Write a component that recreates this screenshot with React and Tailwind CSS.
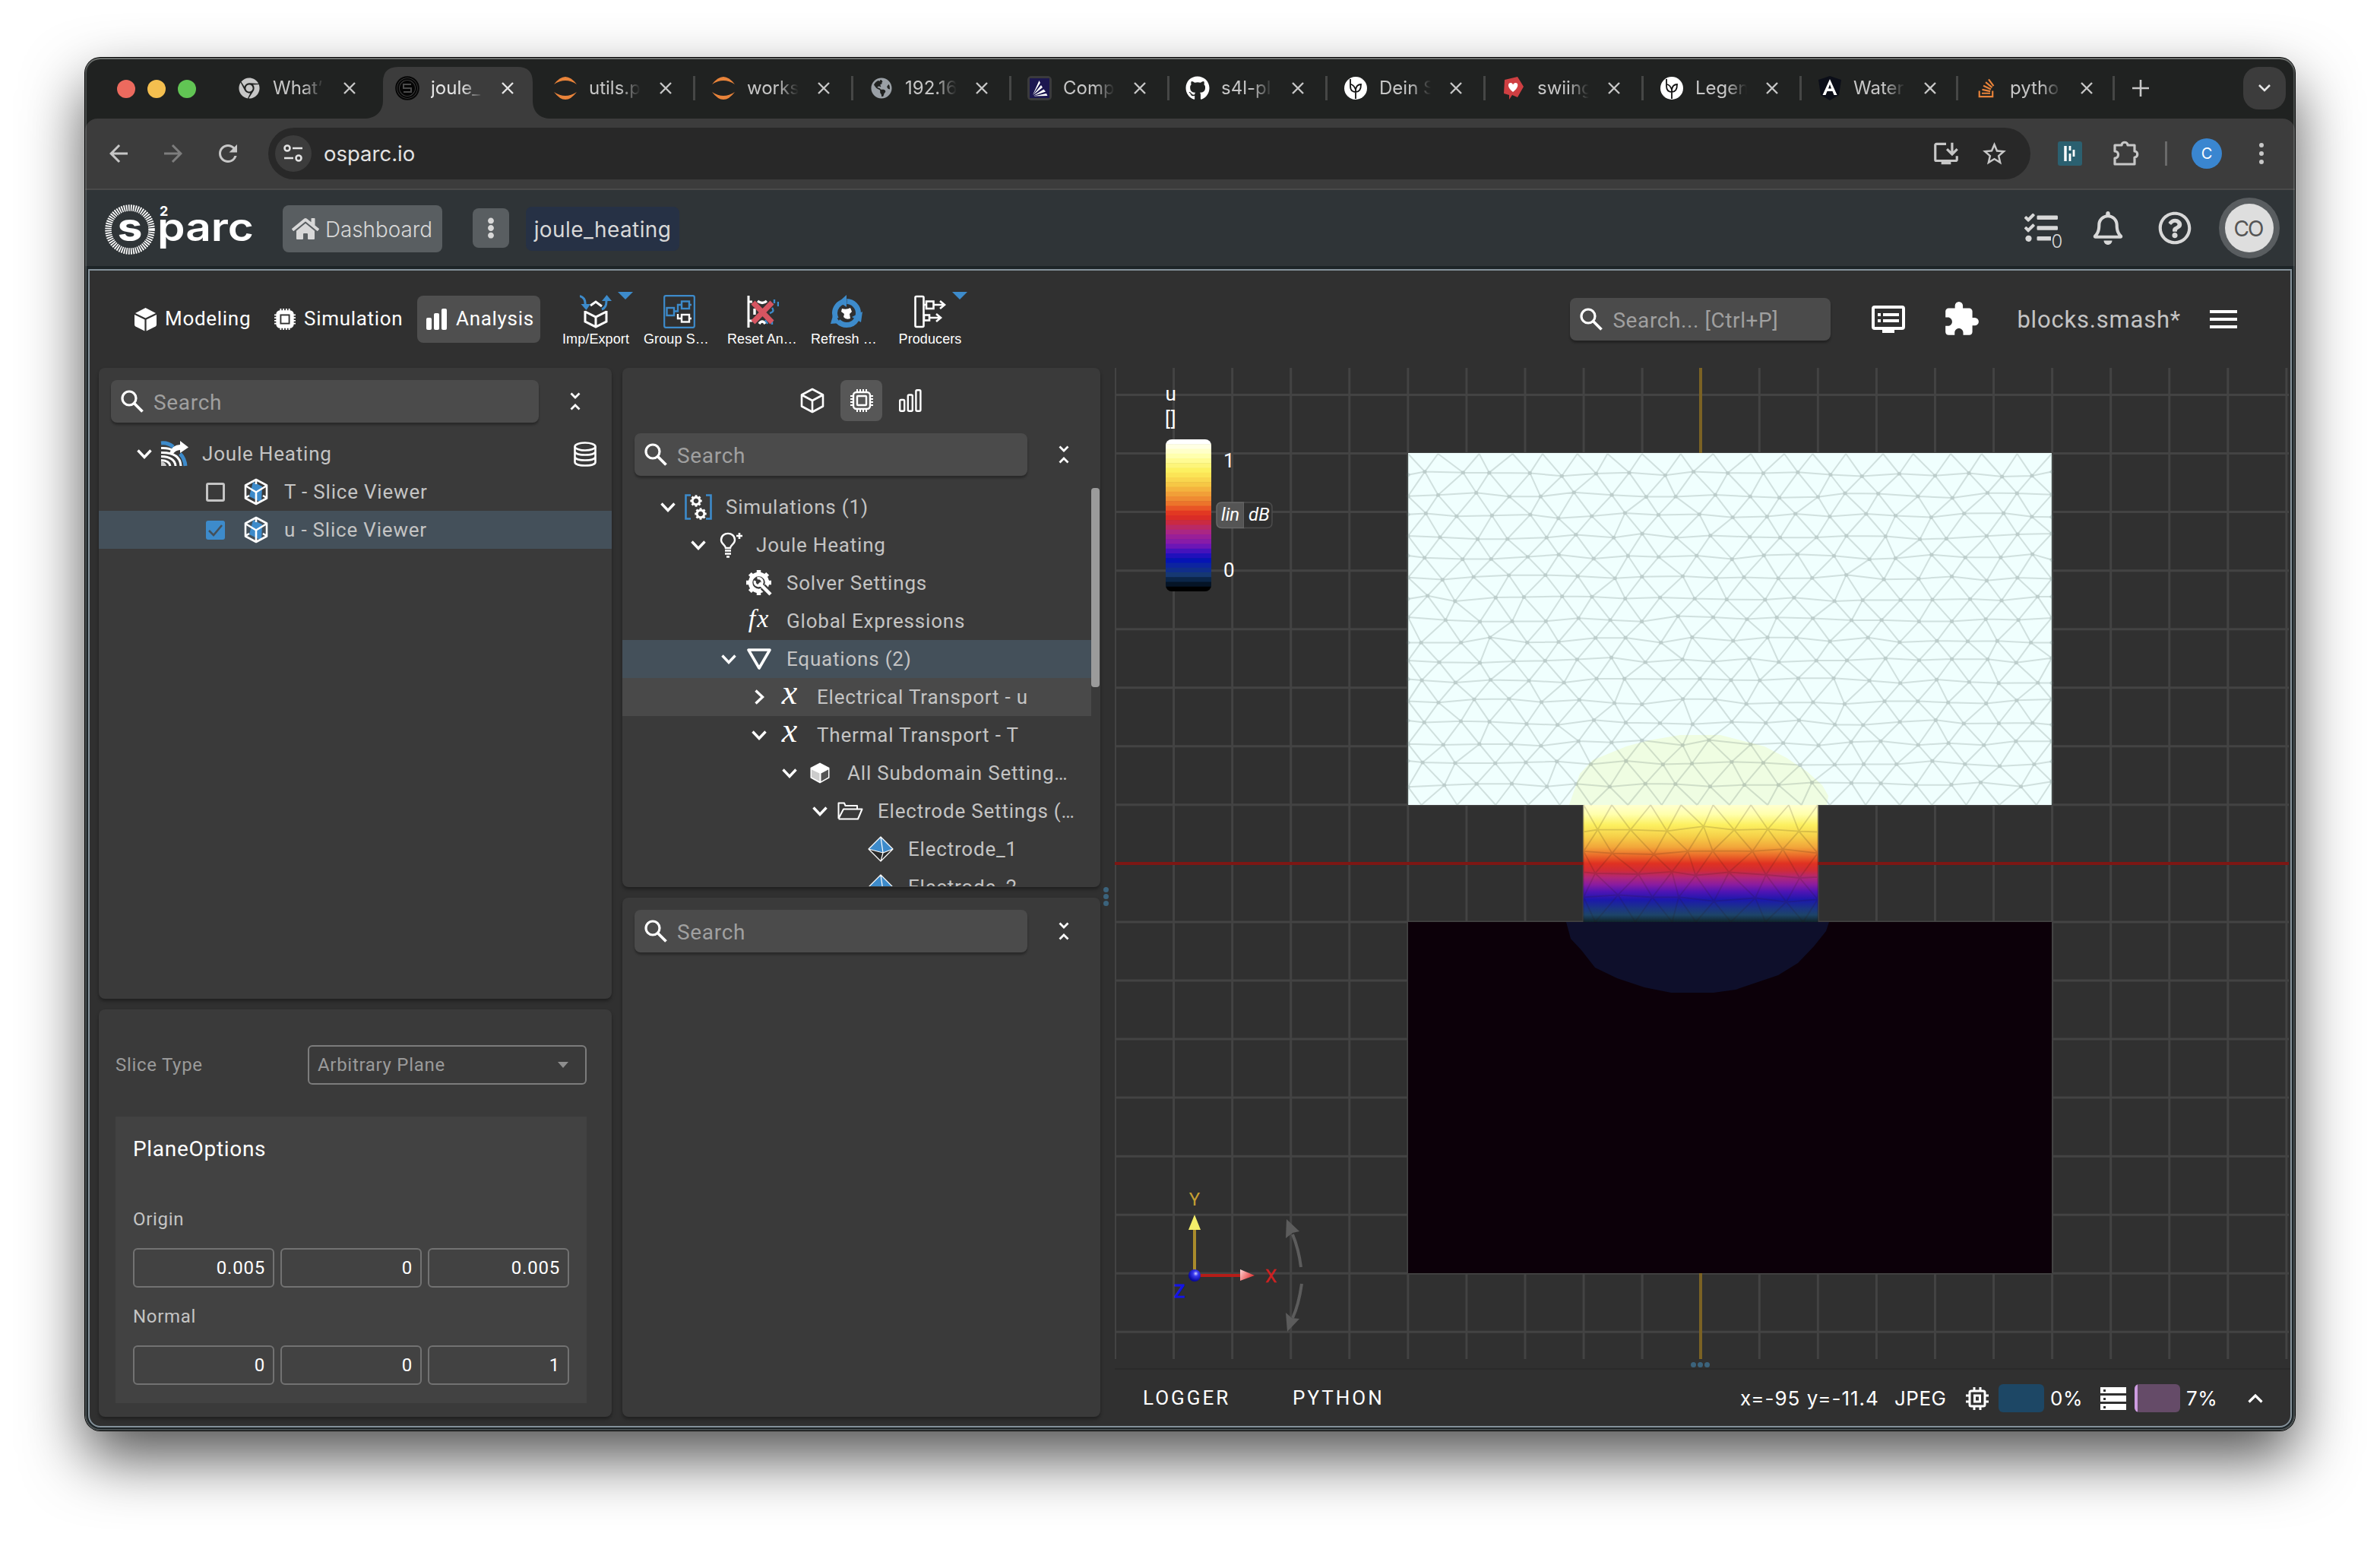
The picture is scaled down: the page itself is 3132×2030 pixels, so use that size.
import React from "react";
import { FaChrome, FaGithub, FaStackOverflow, FaHome, FaEllipsisV, FaRegBell, FaTasks, FaRegQuestionCircle, FaGlobeAmericas } from "react-icons/fa";
import { MdStarBorder, MdExtension, MdArrowBack, MdArrowForward, MdInstallDesktop, MdRefresh } from "react-icons/md";

/* ---------- small icons ---------- */

const Cross = ({ className }) => (
  <svg viewBox="0 0 16 16" className={`h-4 w-4 ${className}`} fill="none" stroke="currentColor" strokeWidth="2.4">
    <path d="M1 1L15 15M15 1L1 15" />
  </svg>
);

const Magnifier = () => (
  <svg viewBox="0 0 30 30" className="h-[30px] w-[30px] shrink-0" fill="none" stroke="#fff" strokeWidth="3.2">
    <circle cx="11" cy="11" r="9" />
    <path d="M17.5 17.5L28.5 28.5" strokeWidth="3.8" />
  </svg>
);

const CollapseAll = () => (
  <svg viewBox="0 0 14 24" className="h-6 w-3.5" fill="none" stroke="#fff" strokeWidth="2.8">
    <path d="M1.5 1.5L7 7L12.5 1.5M1.5 22.5L7 17L12.5 22.5" />
  </svg>
);

const ChevronDown = () => (
  <svg viewBox="0 0 20 13" className="h-[13px] w-5" fill="none" stroke="#fff" strokeWidth="3.4">
    <path d="M1.5 1.5L10 10.5L18.5 1.5" />
  </svg>
);

const ChevronRight = () => (
  <svg viewBox="0 0 13 20" className="h-5 w-[13px]" fill="none" stroke="#fff" strokeWidth="3.4">
    <path d="M1.5 1.5L10.5 10L1.5 18.5" />
  </svg>
);

const SolidCube = () => (
  <svg viewBox="0 0 29 31" className="h-[31px] w-[29px]" fill="#fff">
    <path d="M14.5 0L28 7L14.5 13.5L1 7Z" />
    <path d="M0 9L13.4 15.6V30.5L1.4 24.5Q0 23.6 0 22Z" />
    <path d="M29 9L15.6 15.6V30.5L27.6 24.5Q29 23.6 29 22Z" />
  </svg>
);

const OutlineCube = () => (
  <svg viewBox="0 0 32 34" className="h-[34px] w-8" fill="none" stroke="#fff" strokeWidth="2.6" strokeLinejoin="round">
    <path d="M16 2L30 9.5V24.5L16 32L2 24.5V9.5ZM2 9.5L16 17L30 9.5M16 17V32" />
  </svg>
);

const Chip = ({ solid, className }) => (
  <svg viewBox="0 0 30 30" className={className} fill="none" stroke="#fff">
    <path d="M9 0V5M13 0V5M17 0V5M21 0V5M9 25V30M13 25V30M17 25V30M21 25V30M0 9H5M0 13H5M0 17H5M0 21H5M25 9H30M25 13H30M25 17H30M25 21H30" strokeWidth="2" />
    <rect x="4" y="4" width="22" height="22" rx="4" strokeWidth={solid ? 3 : 2.4} />
    {solid ? <rect x="4" y="4" width="22" height="22" rx="4" fill="#fff" stroke="none" /> : null}
    {solid ? <rect x="9" y="9" width="12" height="12" stroke="#2f2f2f" strokeWidth="2" /> : <rect x="9" y="9" width="12" height="12" rx="1" strokeWidth="2.4" />}
  </svg>
);

const Bars = ({ solid }) =>
  solid ? (
    <svg viewBox="0 0 28 28" className="h-7 w-7" fill="#fff">
      <rect x="0" y="12" width="7" height="16" rx="2" />
      <rect x="10" y="6" width="7" height="22" rx="2" />
      <rect x="20" y="0" width="7" height="28" rx="2" />
    </svg>
  ) : (
    <svg viewBox="0 0 30 30" className="h-[30px] w-[30px]" fill="none" stroke="#fff" strokeWidth="2.4">
      <rect x="1.2" y="14" width="6" height="14.8" rx="1.5" />
      <rect x="11.8" y="7.5" width="6" height="21.3" rx="1.5" />
      <rect x="22.4" y="1.2" width="6" height="27.6" rx="1.5" />
    </svg>
  );

/* ---------- browser favicons ---------- */

const Jupyter = () => (
  <svg viewBox="0 0 30 30" className="h-[30px] w-[30px]" fill="#e8833a">
    <path d="M0 10Q15 -10 30 10Q15 0 0 10Z" />
    <path d="M0 20Q15 40 30 20Q15 30 0 20Z" />
  </svg>
);

const OsparcFav = () => (
  <svg viewBox="0 0 32 32" className="h-8 w-8" fill="none" stroke="#050505">
    <circle cx="16" cy="16" r="14.8" strokeWidth="2" />
    <circle cx="16" cy="16" r="12" strokeWidth="2" />
    <circle cx="16" cy="16" r="9.600" fill="#050505" />
    <path d="M21 11H11V16H21V21H11" stroke="#4a4a4a" strokeWidth="2" />
  </svg>
);

const CompFav = () => (
  <svg viewBox="0 0 32 32" className="h-8 w-8">
    <rect width="32" height="32" rx="5" fill="#3a3a3c" />
    <rect x="3" y="3" width="26" height="26" fill="#1c1750" />
    <path d="M15.5 6L17 9L7 25ZM18 12L20 15L7.500 25ZM21.500 17.500L24 20.500L8 26ZM25 23L26.500 26L8 26.500Z" fill="#fff" />
  </svg>
);

const PlantFav = () => (
  <svg viewBox="0 0 30 30" className="h-[30px] w-[30px]">
    <circle cx="15" cy="15" r="15" fill="#fff" />
    <path d="M8 3V12Q8 20 15 20M15 16V29M15 20Q22 20 22 10Q16 10 15 17Q13 11 9 10" fill="none" stroke="#111" strokeWidth="1.8" />
  </svg>
);

const HeartFav = () => (
  <svg viewBox="0 0 28 30" className="h-[30px] w-7">
    <path d="M2 4L19 0L27 13L19 27L12 24L8 30L8 24L1 22Z" fill="#cf3f42" />
    <path d="M13 20C5 14 6 8 10 8C12 8 13 10 13 10.500C13 10 15 7.500 17 8C21 9 20 15 13 20Z" fill="#fff" />
  </svg>
);

const WaterFav = () => (
  <svg viewBox="0 0 32 32" className="h-8 w-8">
    <path d="M16 0L31 5L28 25L16 32L4 25L1 5Z" fill="#0b0e18" />
    <path d="M6.500 25L16 4L25.500 25H21.500L19.500 20H12.500L10.500 25ZM14 16.500H18L16 11Z" fill="#fff" />
  </svg>
);

const TABS = [
  { icon: <FaChrome className="h-[28px] w-[28px] text-[#c7c7c7]" />, label: "What’", sep: false, w: "w-[208px]" },
  { icon: <OsparcFav />, label: "joule_", active: true, w: "w-[208px]" },
  { icon: <Jupyter />, label: "utils.p", sep: true, w: "w-[208px]" },
  { icon: <Jupyter />, label: "works", sep: true, w: "w-[208px]" },
  { icon: <FaGlobeAmericas className="h-[28px] w-[28px] text-[#9aa0a6]" />, label: "192.16", sep: true, w: "w-[208px]" },
  { icon: <CompFav />, label: "Comp", sep: true, w: "w-[208px]" },
  { icon: <FaGithub className="h-8 w-8 text-white" />, label: "s4l-pl", sep: true, w: "w-[208px]" },
  { icon: <PlantFav />, label: "Dein S", sep: true, w: "w-[208px]" },
  { icon: <HeartFav />, label: "swiing", sep: true, w: "w-[208px]" },
  { icon: <PlantFav />, label: "Legen", sep: true, w: "w-[208px]" },
  { icon: <WaterFav />, label: "Water", sep: true, w: "w-[206px]" },
  { icon: <FaStackOverflow className="h-7 w-7 text-[#e8833a]" />, label: "pytho", sep: true, w: "w-[206px]" },
];

function Tab({ tab }) {
  return (
    <div className={`relative flex h-14 items-center ${tab.w}`}>
      {tab.active ? (
        <svg viewBox="0 0 246 68" className="absolute -left-[20px] top-0 h-[68px] w-[246px]" fill="#3c3c3c">
          <path d="M0 68C14 68 25 60 25 44V20Q25 0 45 0H202Q222 0 222 20V44C222 60 232 68 246 68Z" />
        </svg>
      ) : null}
      <div className="relative ml-[21px] flex w-8 items-center justify-center">{tab.icon}</div>
      <div
        className={`relative ml-[15px] w-[68px] overflow-hidden whitespace-nowrap font-[Inter] text-[24px] [mask-image:linear-gradient(to_right,black_60%,transparent)] ${
          tab.active ? "text-[#e6e6e6]" : "text-[#c7c7c7]"
        }`}
      >
        {tab.label}
      </div>
      <Cross className={`relative ml-[25px] ${tab.active ? "text-[#e6e6e6]" : "text-[#c7c7c7]"}`} />
      {tab.sep ? <div className="ml-auto h-8 w-[3px] bg-[#464746]" /> : null}
    </div>
  );
}

function TabStrip() {
  return (
    <div className="flex h-20 items-start bg-[#202221] pt-3">
      <div className="ml-[42px] flex h-[58px] w-[104px] items-center justify-between">
        <div className="h-6 w-6 rounded-full bg-[#ec6a5e]" />
        <div className="h-6 w-6 rounded-full bg-[#f4bf4f]" />
        <div className="h-6 w-6 rounded-full bg-[#61c554]" />
      </div>
      <div className="ml-[33px] flex">
        {TABS.map((t) => (
          <Tab key={t.label} tab={t} />
        ))}
      </div>
      <svg viewBox="0 0 22 22" className="ml-[23px] mt-[17px] h-[22px] w-[22px]" fill="none" stroke="#c7c7c7" strokeWidth="2.6">
        <path d="M11 0V22M0 11H22" />
      </svg>
      <div className="ml-auto mr-3 flex h-14 w-14 items-center justify-center rounded-[20px] bg-[#3c3c3c]">
        <svg viewBox="0 0 16 10" className="h-[10px] w-4" fill="none" stroke="#e6e6e6" strokeWidth="2.6">
          <path d="M1 1L8 8L15 1" />
        </svg>
      </div>
    </div>
  );
}

function AddressBar() {
  return (
    <div className="flex h-[94px] items-center rounded-t-2xl border-b-2 border-[#4a4a4a] bg-[#3c3c3c]">
      <MdArrowBack className="ml-[26px] h-9 w-9 text-[#c7c7c7]" />
      <MdArrowForward className="ml-[36px] h-9 w-9 text-[#7d7d7d]" />
      <MdRefresh className="ml-[36px] h-9 w-9 text-[#c7c7c7]" />
      <div className="ml-[35px] flex h-[68px] w-[2319px] items-center rounded-full bg-[#282828] pl-[9px]">
        <div className="flex h-12 w-12 items-center justify-center rounded-full bg-[#3c3c3c]">
          <svg viewBox="0 0 26 24" className="h-6 w-[26px]" fill="none" stroke="#e3e3e3" strokeWidth="2.6">
            <circle cx="5" cy="5" r="3.500" />
            <path d="M12 5H25M1 18H13" />
            <circle cx="20" cy="18" r="3.500" />
          </svg>
        </div>
        <div className="ml-4 pt-0.5 font-[Inter] text-[27.500px] text-[#e3e3e3]">osparc.io</div>
        <MdInstallDesktop className="ml-auto h-[38px] w-[38px] text-[#c7c7c7]" />
        <MdStarBorder className="ml-[26px] mr-[29px] h-[37px] w-[37px] text-[#c7c7c7]" />
      </div>
      <svg viewBox="0 0 32 32" className="ml-9 h-8 w-8">
        <rect width="32" height="32" rx="3" fill="#2b6070" />
        <path d="M10 6V26" stroke="#fff" strokeWidth="3.400" />
        <path d="M16 6V12M16 16V26M21 11V20" stroke="#fff" strokeWidth="2.800" />
      </svg>
      <svg viewBox="0 0 34 34" className="ml-[41px] h-[34px] w-[34px]" fill="none" stroke="#c7c7c7" strokeWidth="3.200" strokeLinejoin="round">
        <path d="M2 6H11C11 1 19 1 19 6H28V14C33 14 33 22 28 22V31H2V23C8 23 8 14 2 14Z" />
      </svg>
      <div className="ml-[34px] h-8 w-[3px] bg-[#6a6a6a]" />
      <div className="ml-[32px] flex h-10 w-10 items-center justify-center rounded-full bg-[#3a86d0] font-[Inter] text-[20px] text-white">C</div>
      <div className="ml-[49px] flex h-7 flex-col justify-between">
        <div className="h-1.5 w-1.5 rounded-full bg-[#c7c7c7]" />
        <div className="h-1.5 w-1.5 rounded-full bg-[#c7c7c7]" />
        <div className="h-1.5 w-1.5 rounded-full bg-[#c7c7c7]" />
      </div>
    </div>
  );
}

/* ---------- platform header ---------- */

function Logo() {
  return (
    <svg viewBox="0 0 196 72" className="ml-[26px] h-[72px] w-[196px]">
      <circle cx="33" cy="38" r="28.500" fill="none" stroke="#fff" strokeWidth="8.500" strokeDasharray="1.7 1.3" />
      <circle cx="33" cy="38" r="24" fill="#2f3437" />
      <text x="33" y="53" textAnchor="middle" fontFamily="Inter" fontWeight="700" fontSize="52" fill="#fff" textLength="33" lengthAdjust="spacingAndGlyphs">s</text>
      <text x="69" y="53" fontFamily="Inter" fontWeight="600" fontSize="51" fill="#fff" textLength="127" lengthAdjust="spacingAndGlyphs">parc</text>
      <text x="72" y="20" fontFamily="Inter" fontWeight="700" fontSize="18" fill="#fff">2</text>
    </svg>
  );
}

function PlatformHeader() {
  return (
    <div className="flex h-[100px] items-center bg-[#2f3437] font-[Inter] text-[#d8d8d8]">
      <Logo />
      <div className="ml-[38px] mt-0.5 flex h-[62px] w-[210px] items-center rounded-lg bg-[#595e61] pl-3">
        <FaHome className="h-[36px] w-[36px]" />
        <div className="ml-2 pt-[3px] text-[27.800px] font-light">Dashboard</div>
      </div>
      <div className="ml-10 flex h-[52px] w-12 items-center justify-center rounded-lg bg-[#595e61]">
        <FaEllipsisV className="h-[28px] w-[28px]" />
      </div>
      <div className="ml-[22px] mt-0.5 flex h-[58px] w-[202px] items-center justify-center rounded-lg bg-[#263145]">
        <div className="pt-0.5 text-[28px] tracking-[0.400px]">joule_heating</div>
      </div>
      <div className="relative ml-auto h-[44px] w-[44px]">
        <FaTasks className="h-[44px] w-[44px]" />
        <div className="absolute left-[35px] top-[28px] flex h-6 w-4 items-center justify-center bg-[#2f3437] text-[24px] font-light">0</div>
      </div>
      <FaRegBell className="ml-[44px] h-[44px] w-[44px]" />
      <FaRegQuestionCircle className="ml-[44px] h-[44px] w-[44px]" />
      <div className="ml-[36px] mr-5 flex h-20 w-20 items-center justify-center rounded-full bg-[#595d60]">
        <div className="flex h-16 w-16 items-center justify-center rounded-full bg-[#dedede] pr-[3px] pt-0.5 text-[28px] tracking-[-2px] text-[#555]">CO</div>
      </div>
    </div>
  );
}

/* ---------- ribbon ---------- */

const ImpExport = () => (
  <svg viewBox="0 0 42 44" className="h-[44px] w-[42px]" fill="none">
    <path d="M7 21V35L21 42L35 35V21M7 22L21 29L35 22M21 29V42" stroke="#fff" strokeWidth="3" />
    <path d="M14 14L21 9L29 15" stroke="#fff" strokeWidth="3" />
    <path d="M0 1.500Q8 4 7 13" stroke="#3d8bcb" strokeWidth="3" />
    <path d="M1.500 12H14L8.500 20Z" fill="#3d8bcb" />
    <path d="M29 19Q35 17 35 8" stroke="#3d8bcb" strokeWidth="3" />
    <path d="M29 8H42L35.500 0Z" fill="#3d8bcb" />
  </svg>
);

const GroupStream = () => (
  <svg viewBox="0 0 42 44" className="h-[44px] w-[42px]" fill="none">
    <rect x="1.200" y="1.200" width="39.600" height="41.600" rx="2" stroke="#3d8bcb" strokeWidth="2.200" />
    <rect x="4.500" y="17" width="9.500" height="10" stroke="#3d8bcb" strokeWidth="2.400" />
    <path d="M14 21.500H19V13H24M33 13H37" stroke="#3d8bcb" strokeWidth="2.400" />
    <rect x="24" y="8.500" width="10" height="9.500" stroke="#3d8bcb" strokeWidth="2.400" />
    <path d="M19 25V31H24M33 31H37" stroke="#fff" strokeWidth="2.400" />
    <rect x="24" y="26" width="10" height="9.500" stroke="#fff" strokeWidth="2.400" />
  </svg>
);

const ResetAnalysis = () => (
  <svg viewBox="0 0 42 44" className="h-[44px] w-[42px]" fill="none">
    <path d="M2 1V43M2 9H7M2 34H7" stroke="#fff" strokeWidth="3" />
    <path d="M14 8Q20 13 26 8M10 18V26M16 38Q20 32 24 38" stroke="#fff" strokeWidth="3.400" />
    <path d="M36 6V11M41 9V15M30 24Q37 22 33 17M24 33L27 38M33 32V39" stroke="#3d8bcb" strokeWidth="2.400" />
    <path d="M8 10L33 36M33 10L8 36" stroke="#d65561" strokeWidth="7" />
  </svg>
);

const RefreshStream = () => (
  <svg viewBox="0 0 42 44" className="h-[44px] w-[42px]" fill="none">
    <circle cx="21" cy="24" r="15.500" stroke="#3d8bcb" strokeWidth="7" strokeDasharray="28.500 4" strokeDashoffset="-8" />
    <path d="M21 0V16L11 9ZM42 22L28 29L40 36ZM0 38L4 24L13 37Z" fill="#3d8bcb" />
    <path d="M15 18Q21 20 26 17L28 22L25 25L26 31Q20 33 17 29L18 25L14 22Z" fill="#fff" />
  </svg>
);

const Producers = () => (
  <svg viewBox="0 0 42 44" className="h-[44px] w-[42px]" fill="none" stroke="#fff" strokeWidth="2.600">
    <rect x="1.500" y="2" width="11" height="40" rx="1.500" />
    <path d="M12 13H16M26 13H40M34 8L40 13L34 18M12 30H14M21 30H34M29 25L35 30L29 35" />
    <rect x="16" y="8.500" width="9.500" height="9.500" />
    <rect x="13" y="26.500" width="7" height="7" />
  </svg>
);

const RIBBON = [
  { label: "Imp/Export", icon: <ImpExport />, menu: true, align: "text-center" },
  { label: "Group S…", icon: <GroupStream />, align: "text-left" },
  { label: "Reset An…", icon: <ResetAnalysis />, align: "text-left" },
  { label: "Refresh …", icon: <RefreshStream />, align: "text-left" },
  { label: "Producers", icon: <Producers />, menu: true, align: "text-center" },
];

function Ribbon() {
  return (
    <div className="flex h-[128px] shrink-0 items-center text-[26px] tracking-[0.7px] text-white">
      <div className="ml-[59px] flex w-[184px] items-center gap-[11px]">
        <SolidCube />
        <span className="-mt-0.5">Modeling</span>
      </div>
      <div className="flex w-[188px] items-center gap-[11px]">
        <Chip solid className="h-7 w-7" />
        <span className="-mt-0.5">Simulation</span>
      </div>
      <div className="flex h-[62px] w-[162px] items-center gap-[11px] rounded-lg bg-[#4f4f4f] pl-3">
        <Bars solid />
        <span className="-mt-0.5">Analysis</span>
      </div>
      <div className="ml-[26px] mt-0.5 flex gap-4">
        {RIBBON.map((r) => (
          <div key={r.label} className="relative w-[94px]">
            <div className="flex justify-center">{r.icon}</div>
            <div className={`mt-[5px] whitespace-nowrap font-['Liberation_Sans'] text-[18px] leading-[18px] tracking-[0.100px] ${r.align}`}>{r.label}</div>
            {r.menu ? (
              <svg viewBox="0 0 20 10" className="absolute -top-[4px] left-[76px] h-[10px] w-5" fill="#3d8bcb">
                <path d="M0 0H20L10 10Z" />
              </svg>
            ) : null}
          </div>
        ))}
      </div>
      <div className="ml-auto flex h-14 w-[343px] items-center rounded-lg bg-[#4b4b4b] pl-[13px] shadow-[0_3px_3px_rgba(0,0,0,0.3)]">
        <Magnifier />
        <span className="ml-[13px] pt-[3px] text-[28px] tracking-[0.600px] text-[#a0a0a0]">Search... [Ctrl+P]</span>
      </div>
      <svg viewBox="0 0 44 36" className="ml-[54px] h-9 w-11" fill="none" stroke="#fff" strokeWidth="4">
        <rect x="2" y="2" width="40" height="28" rx="2" />
        <path d="M8 12H12M15 12H36M8 20H12M15 20H36M14 34H30" />
      </svg>
      <MdExtension className="ml-[49px] h-[50px] w-[50px]" />
      <span className="ml-[48px] pt-0.5 text-[31px] tracking-[0.800px] text-[#c4c4c4]">blocks.smash*</span>
      <div className="ml-[38px] mr-[70px] flex h-6 w-9 flex-col justify-between">
        <div className="h-1 bg-white" />
        <div className="h-1 bg-white" />
        <div className="h-1 bg-white" />
      </div>
    </div>
  );
}

/* ---------- panels ---------- */

const PANEL = "shrink-0 overflow-hidden rounded-lg bg-[#3a3a3a] shadow-[0_3px_4px_rgba(0,0,0,0.35)]";

function SearchRow({ w, right }) {
  return (
    <div className="flex items-center">
      <div className={`flex h-14 items-center rounded-lg bg-[#4b4b4b] pl-[13px] shadow-[0_3px_3px_rgba(0,0,0,0.3)] ${w}`}>
        <Magnifier />
        <span className="ml-[13px] pt-[3px] text-[28px] tracking-[0.700px] text-[#a0a0a0]">Search</span>
      </div>
      <div className={right}>
        <CollapseAll />
      </div>
    </div>
  );
}

const FieldIcon = () => (
  <svg viewBox="0 0 38 34" className="h-[34px] w-[38px]" fill="none">
    <path d="M1 3Q10 2 17 8M26 17Q32 23 33 33" stroke="#3d8bcb" strokeWidth="5" />
    <path d="M1 9.500Q12 9 17 13M1 15.500Q26 15 27 33M1 20.500Q19 21 20 33M1 25.500Q12 26 13 33" stroke="#fff" strokeWidth="3" />
    <path d="M1 27V33H8Q7 28 1 27Z" fill="#ccc" />
    <path d="M12 16Q16 5 26 5V0L37 8.500L26 16V12Q20 12 16 18Z" fill="#fff" />
  </svg>
);

const SliceIcon = () => (
  <svg viewBox="0 0 32 36" className="h-[36px] w-8" fill="none">
    <path d="M12 5L24 11L23 32L7 24Z" fill="#3d8bcb" />
    <path d="M16 2L30 9.500V26.500L16 34L2 26.500V9.500ZM2 10L16 18.500L30 10M16 18.500V34M16 2V8M2 26L7 23M30 26L25 23" stroke="#fff" strokeWidth="2.600" strokeLinejoin="round" />
  </svg>
);

const Database = () => (
  <svg viewBox="0 0 30 33" className="h-[33px] w-[30px]" fill="none" stroke="#fff" strokeWidth="2.600">
    <ellipse cx="15" cy="6.500" rx="13.500" ry="5" />
    <path d="M1.500 6.500V27C1.500 33 28.500 33 28.500 27V6.500M1.500 13C1.500 19 28.500 19 28.500 13M1.500 20C1.500 26 28.500 26 28.500 20" />
  </svg>
);

function SliceRow({ label, checked }) {
  return (
    <div className={`flex h-[50px] items-center pl-[141px] ${checked ? "bg-[#44505a]" : ""}`}>
      {checked ? (
        <svg viewBox="0 0 25 25" className="h-[25px] w-[25px]">
          <rect width="25" height="25" rx="3" fill="#3d8bcb" />
          <path d="M4 13L10 19L21 6" fill="none" stroke="#44505a" strokeWidth="2.600" />
        </svg>
      ) : (
        <div className="h-[25px] w-[25px] rounded-[3px] border-3 border-[#c4c4c4]" />
      )}
      <div className="ml-[25px]">
        <SliceIcon />
      </div>
      <span className="ml-[21px]">{label}</span>
    </div>
  );
}

function ResultsPanel() {
  return (
    <div className={`h-[830px] pt-4 ${PANEL}`}>
      <div className="pl-4">
        <SearchRow w="w-[563px]" right="ml-[41px]" />
      </div>
      <div className="mt-4">
        <div className="flex h-[50px] items-center pl-[50px]">
          <ChevronDown />
          <div className="ml-[11px]">
            <FieldIcon />
          </div>
          <span className="ml-[17px]">Joule Heating</span>
          <div className="ml-auto mr-5">
            <Database />
          </div>
        </div>
        <SliceRow label="T - Slice Viewer" />
        <SliceRow label="u - Slice Viewer" checked />
      </div>
    </div>
  );
}

function NumberRow({ label, values, labelMargin }) {
  return (
    <div className={labelMargin}>
      <div className="h-7 leading-7">{label}</div>
      <div className="mt-[24px] flex gap-2 text-white">
        {values.map((v, i) => (
          <div key={i} className="flex h-[52px] w-[186px] items-center justify-end rounded-md border-2 border-[#727272] pr-[10px] tracking-[0.800px]">
            {v}
          </div>
        ))}
      </div>
    </div>
  );
}

function SettingsPanel() {
  return (
    <div className={`h-[536px] pl-[22px] text-[24px] tracking-[0.700px] ${PANEL}`}>
      <div className="mt-[47px] flex items-center text-[#9a9a9a]">
        <span className="w-[253px]">Slice Type</span>
        <div className="flex h-[52px] w-[367px] items-center justify-between rounded-md border-2 border-[#7c7c7c] pl-[11px] pr-[22px]">
          <span>Arbitrary Plane</span>
          <svg viewBox="0 0 14 8" className="h-2 w-3.5" fill="#8e8e8e">
            <path d="M0 0H14L7 8Z" />
          </svg>
        </div>
      </div>
      <div className="mt-[42px] h-[377px] w-[620px] bg-[#424242] pl-[23px] pt-[27px]">
        <div className="h-8 text-[28px] leading-8 text-white">PlaneOptions</div>
        <NumberRow label="Origin" values={["0.005", "0", "0.005"]} labelMargin="mt-[62px]" />
        <NumberRow label="Normal" values={["0", "0", "1"]} labelMargin="mt-[24px]" />
      </div>
    </div>
  );
}

/* ---------- model tree ---------- */

const Gear = ({ cx, cy, r, sw }) => (
  <g transform={`translate(${cx} ${cy})`} stroke="#fff" fill="none">
    <circle r={r} strokeWidth={sw} />
    {[0, 45, 90, 135, 180, 225, 270, 315].map((a) => (
      <path key={a} d={`M0 ${-r}V${-r - sw}`} strokeWidth={sw} transform={`rotate(${a})`} />
    ))}
  </g>
);

const SimulationsIcon = () => (
  <svg viewBox="0 0 36 34" className="h-[34px] w-9" fill="none">
    <path d="M8 1.500H1.500V32.500H8M28 1.500H34.500V32.500H28" stroke="#3d8bcb" strokeWidth="2.600" />
    <Gear cx={15} cy={9} r={4.800} sw={2.900} />
    <Gear cx={21} cy={26} r={4.800} sw={2.900} />
  </svg>
);

const Bulb = () => (
  <svg viewBox="-3 0 30 34" className="h-[34px] w-[30px] overflow-visible" fill="none" stroke="#fff" strokeWidth="2.400">
    <path d="M8 21C8 17 2 16 2 10.500C2 -1 20 -1 20 10.500C20 16 14 17 14 21Z" />
    <path d="M7 24.500H15M7 28.500H15M9 32.500H13M26 1V9M22 5H30" strokeWidth="2.600" />
  </svg>
);

const SolverIcon = () => (
  <svg viewBox="0 0 36 36" className="h-9 w-9" fill="none">
    <Gear cx={17.500} cy={17.500} r={11} sw={5.500} />
    <path d="M23 23L34 34" stroke="#3a3a3a" strokeWidth="9" />
    <path d="M18 18L33 33" stroke="#fff" strokeWidth="4.500" />
    <path d="M12.500 15A5 5 0 1 0 15.500 12" stroke="#fff" strokeWidth="3.200" />
  </svg>
);

const Nabla = () => (
  <svg viewBox="0 0 32 28" className="h-7 w-8" fill="none" stroke="#fff" strokeWidth="3.600" strokeLinejoin="round">
    <path d="M2 2H30L16 26Z" />
  </svg>
);

const ShadedCube = () => (
  <svg viewBox="0 0 26 28" className="h-7 w-[26px]">
    <path d="M13 0.500L25.500 7V20.500L13 27.500L0.500 20.500V7Z" fill="#fff" />
    <path d="M2 9.500L12.500 14.500V25L2 19.500Z" fill="#ccc" />
    <path d="M24 9.500L14.500 14.500V25L24 19.500Z" fill="#555" />
  </svg>
);

const FolderOpen = () => (
  <svg viewBox="0 0 34 24" className="h-6 w-[34px]" fill="none" stroke="#fff" strokeWidth="2" strokeLinejoin="round">
    <path d="M1.500 22V1.500H9L10.500 5H26V9.500M1.500 22L8 9.500H32.500L27 22.500H1.500" />
  </svg>
);

const Octahedron = () => (
  <svg viewBox="0 0 34 34" className="h-[34px] w-[34px]">
    <path d="M17 1L33 17L20 22L1 17Z" fill="#3d8bcb" />
    <path d="M1 17L20 22L17 33ZM20 22L33 17L17 33Z" fill="#2a2a2a" />
    <path d="M17 1L33 17L17 33L1 17ZM17 1L20 22L17 33M1 17L20 22L33 17" fill="none" stroke="#fff" strokeWidth="1.200" strokeLinejoin="round" />
  </svg>
);

const Fx = () => <span className="-mt-1.5 font-['Liberation_Serif'] text-[34px] italic leading-none tracking-[2px] text-white">fx</span>;
const Chi = () => <span className="-mt-3 font-['Liberation_Serif'] text-[46px] italic leading-none tracking-normal text-white">x</span>;

const TREE = [
  { indent: "pl-[40px]", open: true, icon: <SimulationsIcon />, label: "Simulations (1)" },
  { indent: "pl-[80px]", open: true, icon: <Bulb />, label: "Joule Heating" },
  { indent: "pl-[120px]", icon: <SolverIcon />, label: "Solver Settings" },
  { indent: "pl-[120px]", icon: <Fx />, label: "Global Expressions" },
  { indent: "pl-[120px]", open: true, icon: <Nabla />, label: "Equations (2)", bg: "bg-[#44505a]" },
  { indent: "pl-[160px]", closed: true, icon: <Chi />, label: "Electrical Transport - u", bg: "bg-[#494949]" },
  { indent: "pl-[160px]", open: true, icon: <Chi />, label: "Thermal Transport - T" },
  { indent: "pl-[200px]", open: true, icon: <ShadedCube />, label: "All Subdomain Setting…" },
  { indent: "pl-[240px]", open: true, icon: <FolderOpen />, label: "Electrode Settings (…" },
  { indent: "pl-[280px]", icon: <Octahedron />, label: "Electrode_1" },
  { indent: "pl-[280px]", icon: <Octahedron />, label: "Electrode_2" },
];

function TreePanel() {
  return (
    <div className={`h-[683px] pt-4 ${PANEL}`}>
      <div className="ml-[231px] flex h-[54px] items-center">
        <div className="flex w-[56px] justify-start pl-[3px]">
          <OutlineCube />
        </div>
        <div className="flex h-[54px] w-[55px] items-center justify-center rounded-lg bg-[#575757]">
          <Chip className="h-[30px] w-[30px]" />
        </div>
        <div className="ml-[22px]">
          <Bars />
        </div>
      </div>
      <div className="mt-4 pl-4">
        <SearchRow w="w-[517px]" right="ml-[41px]" />
      </div>
      <div className="mt-4 flex h-[524px] overflow-hidden">
        <div className="w-[617px]">
          {TREE.map((n) => (
            <div key={n.label} className={`flex h-[50px] items-center ${n.indent} ${n.bg || ""}`}>
              <div className="flex w-10 shrink-0 justify-center">{n.open ? <ChevronDown /> : n.closed ? <ChevronRight /> : null}</div>
              <div className="flex w-10 shrink-0 items-center justify-center">{n.icon}</div>
              <span className="ml-4 whitespace-nowrap">{n.label}</span>
            </div>
          ))}
        </div>
        <div className="h-[262px] w-[11px] rounded-[4px] bg-[#9b9b9b]" />
      </div>
    </div>
  );
}

/* ---------- 3D view ---------- */

function makeMesh(x0, y0, w, h, cols, rows, amp, seed) {
  let s = seed;
  const rnd = () => {
    s = (s * 16807) % 2147483647;
    return s / 2147483647 - 0.5;
  };
  const grid = [];
  for (let r = 0; r <= rows; r++) {
    const us = [];
    if (r % 2 === 0) for (let k = 0; k <= cols; k++) us.push(k);
    else {
      us.push(0);
      for (let k = 0; k < cols; k++) us.push(k + 0.5);
      us.push(cols);
    }
    grid.push(
      us.map((u) => {
        const edgeX = u === 0 || u === cols;
        const edgeY = r === 0 || r === rows;
        return [x0 + (u * w) / cols + (edgeX ? 0 : rnd() * amp), y0 + (r * h) / rows + (edgeY ? 0 : rnd() * amp * 0.7)];
      })
    );
  }
  const seg = (a, b) => `M${a[0].toFixed(1)} ${a[1].toFixed(1)}L${b[0].toFixed(1)} ${b[1].toFixed(1)}`;
  let d = "";
  grid.forEach((row, r) => {
    if (r > 0 && r < rows) for (let k = 1; k < row.length; k++) d += seg(row[k - 1], row[k]);
    if (r % 2 === 0) {
      [grid[r - 1], grid[r + 1]].forEach((o) => {
        if (!o) return;
        row.forEach((p, k) => {
          d += seg(p, o[k]) + (o[k + 1] ? seg(p, o[k + 1]) : "");
        });
      });
    }
  });
  return { d, nodes: grid.slice(1, -1).flat() };
}

const MESH_TOP = makeMesh(1853, 597, 847, 462, 19, 17, 11, 4211);
const MESH_MID = makeMesh(2084, 1059, 308, 154, 7, 5, 14, 977);

const BANDS = [
  "#ffffff", "#ffffe4", "#ffffc9", "#ffffae", "#fffb93", "#fdf57a", "#fcf060", "#fbe456",
  "#f9d64e", "#f6c745", "#f4b33e", "#f19f38", "#ef8b32", "#ec742b", "#e85526", "#e23822",
  "#da2c27", "#ca2a42", "#ba2964", "#aa2684", "#991f98", "#881ba8", "#6c16b6", "#4412bc",
  "#2010bc", "#0514b4", "#0c24a0", "#102e8a", "#163872", "#0b2548", "#051426", "#000000",
];

const V_LINES = Array.from({ length: 21 }, (_, i) => 1467.500 + i * 77.070);
const H_LINES = Array.from({ length: 17 }, (_, i) => 519.500 + i * 77.050);

function View3D() {
  return (
    <svg viewBox="1467 484 1545 1304" className="h-[1304px] w-[1545px] shrink-0">
      <defs>
        <linearGradient id="neck" x1="0" y1="0" x2="0" y2="1">
          <stop offset="0" stopColor="#ffffd0" />
          <stop offset="0.08" stopColor="#ffffac" />
          <stop offset="0.17" stopColor="#fcf060" />
          <stop offset="0.27" stopColor="#f6cf48" />
          <stop offset="0.36" stopColor="#f2a63a" />
          <stop offset="0.44" stopColor="#ea6428" />
          <stop offset="0.5" stopColor="#e03121" />
          <stop offset="0.56" stopColor="#cf2b38" />
          <stop offset="0.62" stopColor="#b02778" />
          <stop offset="0.68" stopColor="#8a1ca0" />
          <stop offset="0.74" stopColor="#5014b4" />
          <stop offset="0.81" stopColor="#1c18ac" />
          <stop offset="0.88" stopColor="#1b3488" />
          <stop offset="0.94" stopColor="#1d4468" />
          <stop offset="1" stopColor="#10242a" />
        </linearGradient>
        <radialGradient id="ball" cx="0.6" cy="0.35" r="0.6">
          <stop offset="0" stopColor="#cfd0ff" />
          <stop offset="0.35" stopColor="#3a3af0" />
          <stop offset="1" stopColor="#0808a0" />
        </radialGradient>
        <linearGradient id="coneX" x1="0" y1="0" x2="1" y2="0.5">
          <stop offset="0" stopColor="#ffd6d6" />
          <stop offset="1" stopColor="#e03030" />
        </linearGradient>
      </defs>

      <g stroke="#434343" strokeWidth="3">
        {V_LINES.map((x) => (
          <path key={x} d={`M${x} 484V1788`} />
        ))}
        {H_LINES.map((y) => (
          <path key={y} d={`M1467 ${y}H3012`} />
        ))}
      </g>
      <path d="M2238 484V1788" stroke="#7b6223" strokeWidth="4" />
      <path d="M1467 1136H3012" stroke="#7d1714" strokeWidth="4" />

      <rect x="1853" y="596" width="847" height="463" fill="#f0fffe" />
      <path d="M2065 1059L2079 1018L2096 1000L2140 982L2170 974L2211 967H2264L2322 982L2351 997L2378 1015L2398 1033L2406 1047L2404 1059Z" fill="#effde2" />
      <rect x="2083.500" y="1059" width="309" height="154" fill="url(#neck)" />
      <rect x="1853" y="1213" width="847" height="462" fill="#0c0009" />
      <path d="M2061 1213L2067 1235L2081 1250L2099 1273L2128 1287L2164 1299L2199 1306H2255L2284 1302L2340 1283L2366 1267L2387 1245L2403 1225L2407 1213Z" fill="#0e0f2b" />
      <path d={MESH_TOP.d} stroke="#5a6c68" strokeOpacity="0.21" strokeWidth="2" />
      <g fill="#5a6c68" fillOpacity="0.16">
        {MESH_TOP.nodes.map(([x, y], i) => (
          <circle key={i} cx={x} cy={y} r="2.600" />
        ))}
      </g>
      <path d={MESH_MID.d} stroke="#2a1a10" strokeOpacity="0.16" strokeWidth="1.800" />

      {/* orientation gizmo */}
      <path d="M1572 1672V1616" stroke="#a98b2c" strokeWidth="4" />
      <path d="M1572 1598L1580 1618H1564Z" fill="#f4ee6a" />
      <path d="M1578 1678H1634" stroke="#b51d18" strokeWidth="4" />
      <path d="M1651 1678L1632 1685V1670Z" fill="url(#coneX)" />
      <circle cx="1572" cy="1678" r="8" fill="url(#ball)" />
      <g fontFamily="Roboto" fontSize="24" textAnchor="middle">
        <text x="1572" y="1586" fill="#c59f33">Y</text>
        <text x="1672.500" y="1686.500" fill="#d02020" stroke="#d02020" strokeWidth="0.400">X</text>
        <text x="1552.500" y="1706.500" fill="#1414e6" stroke="#1414e6" strokeWidth="1">Z</text>
      </g>
      <g fill="none" stroke="#5c5c5c" strokeWidth="4">
        <path d="M1712 1667Q1709 1643 1701 1624M1713 1689Q1709 1717 1701 1734" />
      </g>
      <path d="M1693 1604L1710 1620L1701 1622L1692 1629ZM1694 1752L1710 1735L1700 1734L1692 1727Z" fill="#5c5c5c" />

      {/* colour legend */}
      <clipPath id="legend">
        <rect x="1534" y="578" width="60" height="200" rx="8" />
      </clipPath>
      <g clipPath="url(#legend)">
        {BANDS.map((c, i) => (
          <rect key={c} x="1534" y={578 + i * 6.250} width="60" height="6.800" fill={c} />
        ))}
      </g>
      <g fontFamily="Roboto" fontSize="26" fill="#fff">
        <text x="1533.500" y="526.500">u</text>
        <text x="1533" y="560" letterSpacing="0.800">[]</text>
        <text x="1610" y="615">1</text>
        <text x="1610" y="758.500">0</text>
      </g>
      <path d="M1637 661V694.500H1608Q1601 694.500 1601 687.500V668Q1601 661 1608 661Z" fill="#555555" stroke="#686868" strokeWidth="1.500" />
      <path d="M1637 661H1667Q1674 661 1674 668V687.500Q1674 694.500 1667 694.500H1637" fill="#303030" stroke="#4c4c4c" strokeWidth="1.500" />
      <g fontFamily="Roboto" fontSize="24" fontStyle="italic" fill="#fff">
        <text x="1607" y="685">lin</text>
        <text x="1643" y="685">dB</text>
      </g>
    </svg>
  );
}

function StatusBar() {
  return (
    <div className="flex flex-1 flex-col">
      <div className="flex h-3 items-center gap-[2px] pl-[758px] pt-[3px]">
        <div className="h-[7px] w-[7px] rounded-full bg-[#3b637c]" />
        <div className="h-[7px] w-[7px] rounded-full bg-[#3b637c]" />
        <div className="h-[7px] w-[7px] rounded-full bg-[#3b637c]" />
      </div>
      <div className="flex h-[78px] items-center border-t-2 border-[#2a2a2a] text-[26px] text-white">
        <span className="-mt-0.5 ml-[37px] w-[197px] tracking-[3px]">LOGGER</span>
        <span className="-mt-0.5 tracking-[3px]">PYTHON</span>
        <div className="-mt-px ml-auto flex items-center font-[Inter]">
          <span className="w-[203px] whitespace-nowrap tracking-[1px]">x=-95 y=-11.4</span>
          <span className="w-[94px] tracking-[0.500px]">JPEG</span>
          <svg viewBox="0 0 30 32" className="h-8 w-[30px]" fill="none" stroke="#fff" strokeWidth="3">
            <rect x="5" y="6" width="20" height="20" rx="2" />
            <rect x="11.500" y="12" width="7" height="8" />
            <path d="M11 1V5M19 1V5M11 27V31M19 27V31M0 12H4M0 20H4M26 12H30M26 20H30" />
          </svg>
          <div className="ml-[13px] h-[37px] w-[60px] rounded-md bg-[#1d4765]" />
          <span className="ml-2 w-[66px] tracking-[0.600px]">0%</span>
          <svg viewBox="0 0 34 30" className="h-[30px] w-[34px]">
            <path d="M0 0H34V8H0ZM0 11H34V19H0ZM0 22H34V30H0Z" fill="#fff" />
            <path d="M4 3H7V6H4ZM4 14H7V17H4ZM4 25H7V28H4Z" fill="#303030" />
          </svg>
          <div className="ml-[11px] flex h-[37px] w-[60px] overflow-hidden rounded-md bg-[#654b68]">
            <div className="w-1 bg-[#cd9ce0]" />
          </div>
          <span className="ml-2 w-[81px] tracking-[0.600px]">7%</span>
          <svg viewBox="0 0 20 12" className="mr-[36px] h-3 w-5" fill="none" stroke="#fff" strokeWidth="3.200">
            <path d="M1.500 10.500L10 2L18.500 10.500" />
          </svg>
        </div>
      </div>
    </div>
  );
}

export default function App() {
  return (
    <div className="h-[2030px] w-[3132px] overflow-hidden bg-white pl-[112px] pt-[76px]">
      <div className="h-[1806px] w-[2908px] rounded-[20px] shadow-[0_0_0_1px_#000,0_36px_80px_rgba(0,0,0,0.68)]">
        <div className="relative flex h-full w-full flex-col overflow-hidden rounded-[20px] bg-[#1d2427]">
          <div className="shrink-0 bg-[#202221]">
            <TabStrip />
            <AddressBar />
          </div>
          <PlatformHeader />
          <div className="mx-1 mb-1 mt-1 flex h-[1524px] flex-col overflow-hidden rounded-b-2xl border-2 border-[#84919a] bg-[#303030] font-[Roboto]">
            <Ribbon />
            <div className="flex flex-1">
              <div className="ml-3 flex w-[675px] flex-col gap-3.5 text-[26px] tracking-[0.800px] text-[#c4c4c4]">
                <ResultsPanel />
                <SettingsPanel />
              </div>
              <div className="ml-[14px] flex w-[629px] flex-col gap-3.5 text-[26px] tracking-[0.800px] text-[#c4c4c4]">
                <TreePanel />
                <div className={`h-[683px] pl-4 pt-4 ${PANEL}`}>
                  <SearchRow w="w-[517px]" right="ml-[41px]" />
                </div>
              </div>
              <div className="flex w-[19px] flex-col items-center gap-[2px] pr-1 pt-[683px]">
                <div className="h-[7px] w-[7px] shrink-0 rounded-full bg-[#3b637c]" />
                <div className="h-[7px] w-[7px] shrink-0 rounded-full bg-[#3b637c]" />
                <div className="h-[7px] w-[7px] shrink-0 rounded-full bg-[#3b637c]" />
              </div>
              <div className="flex flex-1 flex-col">
                <View3D />
                <StatusBar />
              </div>
            </div>
          </div>
          <div className="pointer-events-none absolute inset-0 rounded-[20px] shadow-[inset_0_2px_0_#6d706e,inset_0_0_0_2px_rgba(150,155,155,0.35)]" />
        </div>
      </div>
    </div>
  );
}
